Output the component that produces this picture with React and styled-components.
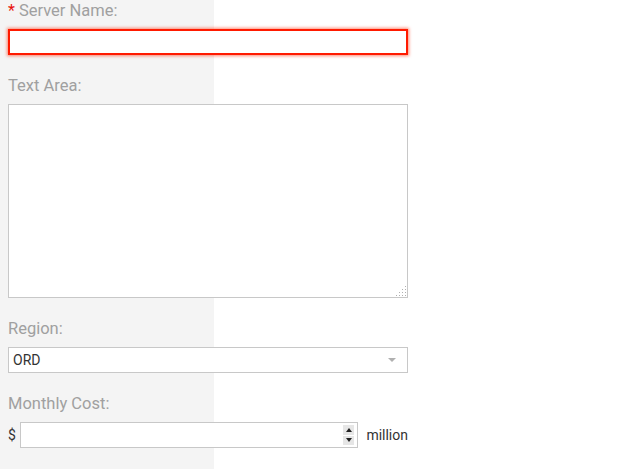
import React from 'react';
import styled, { createGlobalStyle } from 'styled-components';

const GlobalStyle = createGlobalStyle`
  html, body {
    margin: 0;
    padding: 0;
    background: #fff;
  }
  body {
    font-family: Roboto, "Liberation Sans", sans-serif;
  }
`;

const Page = styled.div`
  min-height: 469px;
  box-sizing: border-box;
  padding: 1px 8px 0;
  background: linear-gradient(to right, #f4f4f4 214px, #fff 214px);
`;

const Form = styled.form`
  width: 400px;
  display: flex;
  flex-direction: column;
`;

const Field = styled.div`
  display: flex;
  flex-direction: column;
  margin-bottom: ${props => props.gap || 21}px;
`;

const Label = styled.label`
  height: 20px;
  margin-bottom: 8px;
  font-size: 16.5px;
  line-height: 22px;
  color: #a0a0a0;
  display: flex;
  align-items: center;
  gap: 4px;
`;

const Required = styled.span`
  color: #e8140c;
  font-size: 16px;
`;

const TextInput = styled.input`
  box-sizing: border-box;
  height: 26px;
  width: 100%;
  margin: 0;
  padding: 0 4px;
  background: #fff;
  font: 14px Roboto, "Liberation Sans", sans-serif;
  border: 1px solid #c8c8c8;
  outline: none;
  ${props =>
    props.invalid &&
    `
    border: 2px solid #ff1a00;
    box-shadow: 0 0 3px 1px rgba(255, 40, 0, 0.55);
  `}
`;

const AreaBox = styled.div`
  position: relative;
  height: 194px;
`;

const TextArea = styled.textarea`
  box-sizing: border-box;
  display: block;
  width: 100%;
  height: 100%;
  margin: 0;
  padding: 4px;
  background: #fff;
  border: 1px solid #c8c8c8;
  font: 14px Roboto, "Liberation Sans", sans-serif;
  outline: none;
  resize: none;
`;

const Grip = styled.div`
  position: absolute;
  right: 2px;
  bottom: 2px;
  width: 11px;
  height: 11px;
  pointer-events: none;
  background:
    linear-gradient(to top left, transparent 0, transparent 0) no-repeat,
    radial-gradient(circle, #b0b0b0 0.8px, transparent 1px) 0 0 / 3px 3px;
  clip-path: polygon(100% 0, 100% 100%, 0 100%);
`;

const Select = styled.div`
  box-sizing: border-box;
  height: 26px;
  display: flex;
  align-items: center;
  justify-content: space-between;
  padding: 0 11px 0 4px;
  background: #fff;
  border: 1px solid #c8c8c8;
  font-size: 14px;
  color: #333;
`;

const Caret = styled.span`
  width: 0;
  height: 0;
  border-left: 4.5px solid transparent;
  border-right: 4.5px solid transparent;
  border-top: 4.5px solid #b0b0b0;
`;

const CostRow = styled.div`
  display: flex;
  align-items: center;
  height: 26px;
  font-size: 14px;
  color: #333;
`;

const Dollar = styled.span`
  width: 12px;
`;

const NumberBox = styled.div`
  position: relative;
  box-sizing: border-box;
  flex: 1;
  height: 26px;
  background: #fff;
  border: 1px solid #c8c8c8;
`;

const NumberInput = styled.input`
  box-sizing: border-box;
  width: 100%;
  height: 100%;
  border: 0;
  padding: 0 20px 0 4px;
  outline: none;
  background: transparent;
  font: 14px Roboto, "Liberation Sans", sans-serif;
  -moz-appearance: textfield;
  &::-webkit-inner-spin-button,
  &::-webkit-outer-spin-button {
    -webkit-appearance: none;
    margin: 0;
  }
`;

const Spinner = styled.div`
  position: absolute;
  right: 3px;
  top: 2px;
  bottom: 2px;
  width: 11px;
  display: flex;
  flex-direction: column;
  gap: 1px;
`;

const SpinButton = styled.div`
  flex: 1;
  background: #e6e6e6;
  display: flex;
  align-items: center;
  justify-content: center;
  &::after {
    content: '';
    border-left: 3px solid transparent;
    border-right: 3px solid transparent;
    ${props =>
      props.up
        ? 'border-bottom: 4px solid #222;'
        : 'border-top: 4px solid #222;'}
  }
`;

const Unit = styled.span`
  margin-left: 8px;
`;

export default function App() {
  return (
    <Page>
      <GlobalStyle />
      <Form>
        <Field>
          <Label>
            <Required>*</Required>Server Name:
          </Label>
          <TextInput type="text" invalid />
        </Field>
        <Field>
          <Label>Text Area:</Label>
          <AreaBox>
            <TextArea />
            <Grip />
          </AreaBox>
        </Field>
        <Field>
          <Label>Region:</Label>
          <Select>
            <span>ORD</span>
            <Caret />
          </Select>
        </Field>
        <Field>
          <Label>Monthly Cost:</Label>
          <CostRow>
            <Dollar>$</Dollar>
            <NumberBox>
              <NumberInput type="number" />
              <Spinner>
                <SpinButton up />
                <SpinButton />
              </Spinner>
            </NumberBox>
            <Unit>million</Unit>
          </CostRow>
        </Field>
      </Form>
    </Page>
  );
}
